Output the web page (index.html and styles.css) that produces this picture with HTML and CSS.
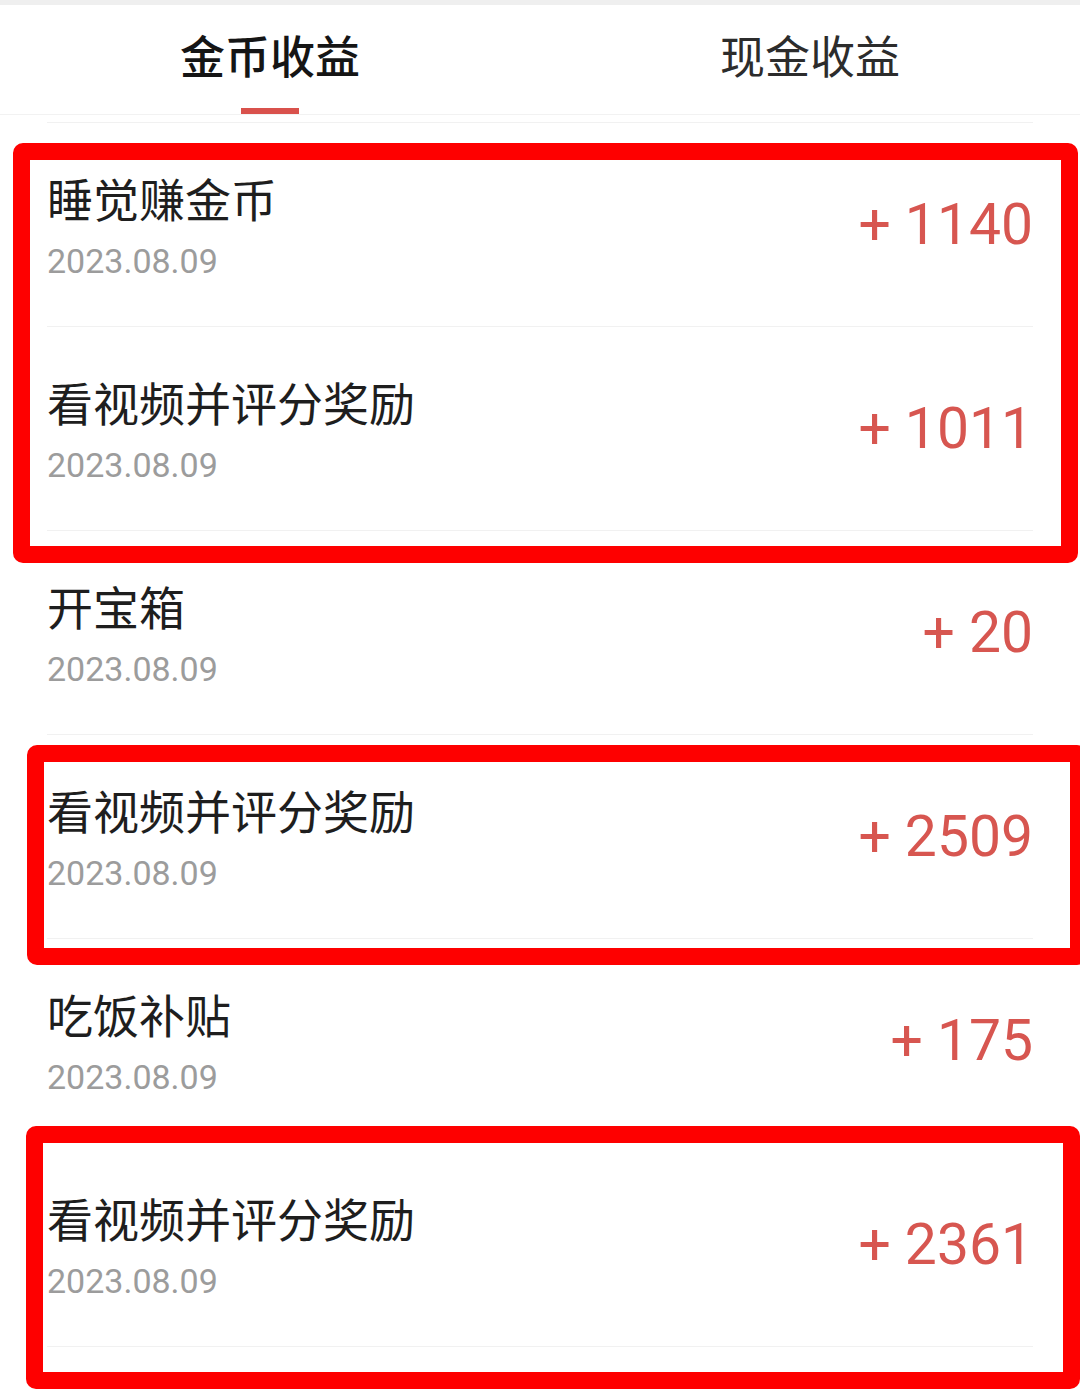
FILE: index.html
```
<!DOCTYPE html>
<html lang="zh-CN">
<head>
    <meta charset="utf-8" />
    <title>金币收益</title>
    <link rel="stylesheet" href="styles.css">
</head>
<body>
<div class="page">
    <div class="tabs">
        <div class="tab active">
            <span class="tab-label">金币收益</span>
            <span class="tab-line"></span>
        </div>
        <div class="tab">
            <span class="tab-label">现金收益</span>
            <span class="tab-line"></span>
        </div>
    </div>

    <div class="list">
        <div class="row">
            <div class="info">
                <div class="title">睡觉赚金币</div>
                <div class="date">2023.08.09</div>
            </div>
            <div class="amount">+ 1140</div>
        </div>
        <div class="row">
            <div class="info">
                <div class="title">看视频并评分奖励</div>
                <div class="date">2023.08.09</div>
            </div>
            <div class="amount">+ 1011</div>
        </div>
        <div class="row">
            <div class="info">
                <div class="title">开宝箱</div>
                <div class="date">2023.08.09</div>
            </div>
            <div class="amount">+ 20</div>
        </div>
        <div class="row">
            <div class="info">
                <div class="title">看视频并评分奖励</div>
                <div class="date">2023.08.09</div>
            </div>
            <div class="amount">+ 2509</div>
        </div>
        <div class="row">
            <div class="info">
                <div class="title">吃饭补贴</div>
                <div class="date">2023.08.09</div>
            </div>
            <div class="amount">+ 175</div>
        </div>
        <div class="row">
            <div class="info">
                <div class="title">看视频并评分奖励</div>
                <div class="date">2023.08.09</div>
            </div>
            <div class="amount">+ 2361</div>
        </div>
        <div class="row row-end"></div>
    </div>

    <!-- red marker boxes drawn over the screenshot -->
    <div class="mark mark-1"></div>
    <div class="mark mark-2"></div>
    <div class="mark mark-3"></div>
</div>
</body>
</html>
```

FILE: styles.css
```
body {
    margin: 0;
    overflow: hidden;
    background: #fff;
}

.page {
    position: relative;
    width: 1080px;
    height: 1394px;
    overflow: hidden;
    font-family: "Noto Sans CJK SC", Roboto, sans-serif;
}

.tabs {
    display: flex;
    border-top: 5px solid #efefef;
    border-bottom: 1px solid #f2f2f2;
}

.tab {
    flex: 1;
    display: flex;
    flex-direction: column;
    align-items: center;
    padding-top: 20px;
}

.tab-label {
    font-size: 45px;
    line-height: 60px;
    font-weight: 400;
    color: #2c2c2c;
}

.tab-line {
    width: 58px;
    height: 6px;
    margin-top: 23px;
}

.tab.active .tab-label {
    font-weight: 500;
    color: #151515;
}

.tab.active .tab-line {
    background: #d9514c;
}

.list {
    padding: 7px 47px 0 47px;
}

.row {
    height: 204px;
    box-sizing: border-box;
    border-top: 1px solid #f1f1f1;
    display: flex;
    justify-content: space-between;
    align-items: center;
}

.row-end {
    height: 40px;
}

.info {
    align-self: flex-start;
    padding-top: 44px;
}

.title {
    font-size: 46px;
    line-height: 60px;
    color: #1e1e1e;
}

.date {
    margin-top: 14px;
    font-family: Roboto, "Noto Sans", sans-serif;
    font-size: 34px;
    line-height: 40px;
    color: #9c9c9c;
}

.amount {
    font-family: Roboto, "Noto Sans", sans-serif;
    font-size: 57px;
    color: #d75650;
}

.mark {
    position: absolute;
    box-sizing: border-box;
    border: 17px solid #fe0000;
    border-radius: 10px;
}

.mark-1 {
    left: 13px;
    top: 143px;
    width: 1065px;
    height: 420px;
}

.mark-2 {
    left: 27px;
    top: 745px;
    width: 1060px;
    height: 220px;
}

.mark-3 {
    left: 26px;
    top: 1126px;
    width: 1054px;
    height: 263px;
}
```
